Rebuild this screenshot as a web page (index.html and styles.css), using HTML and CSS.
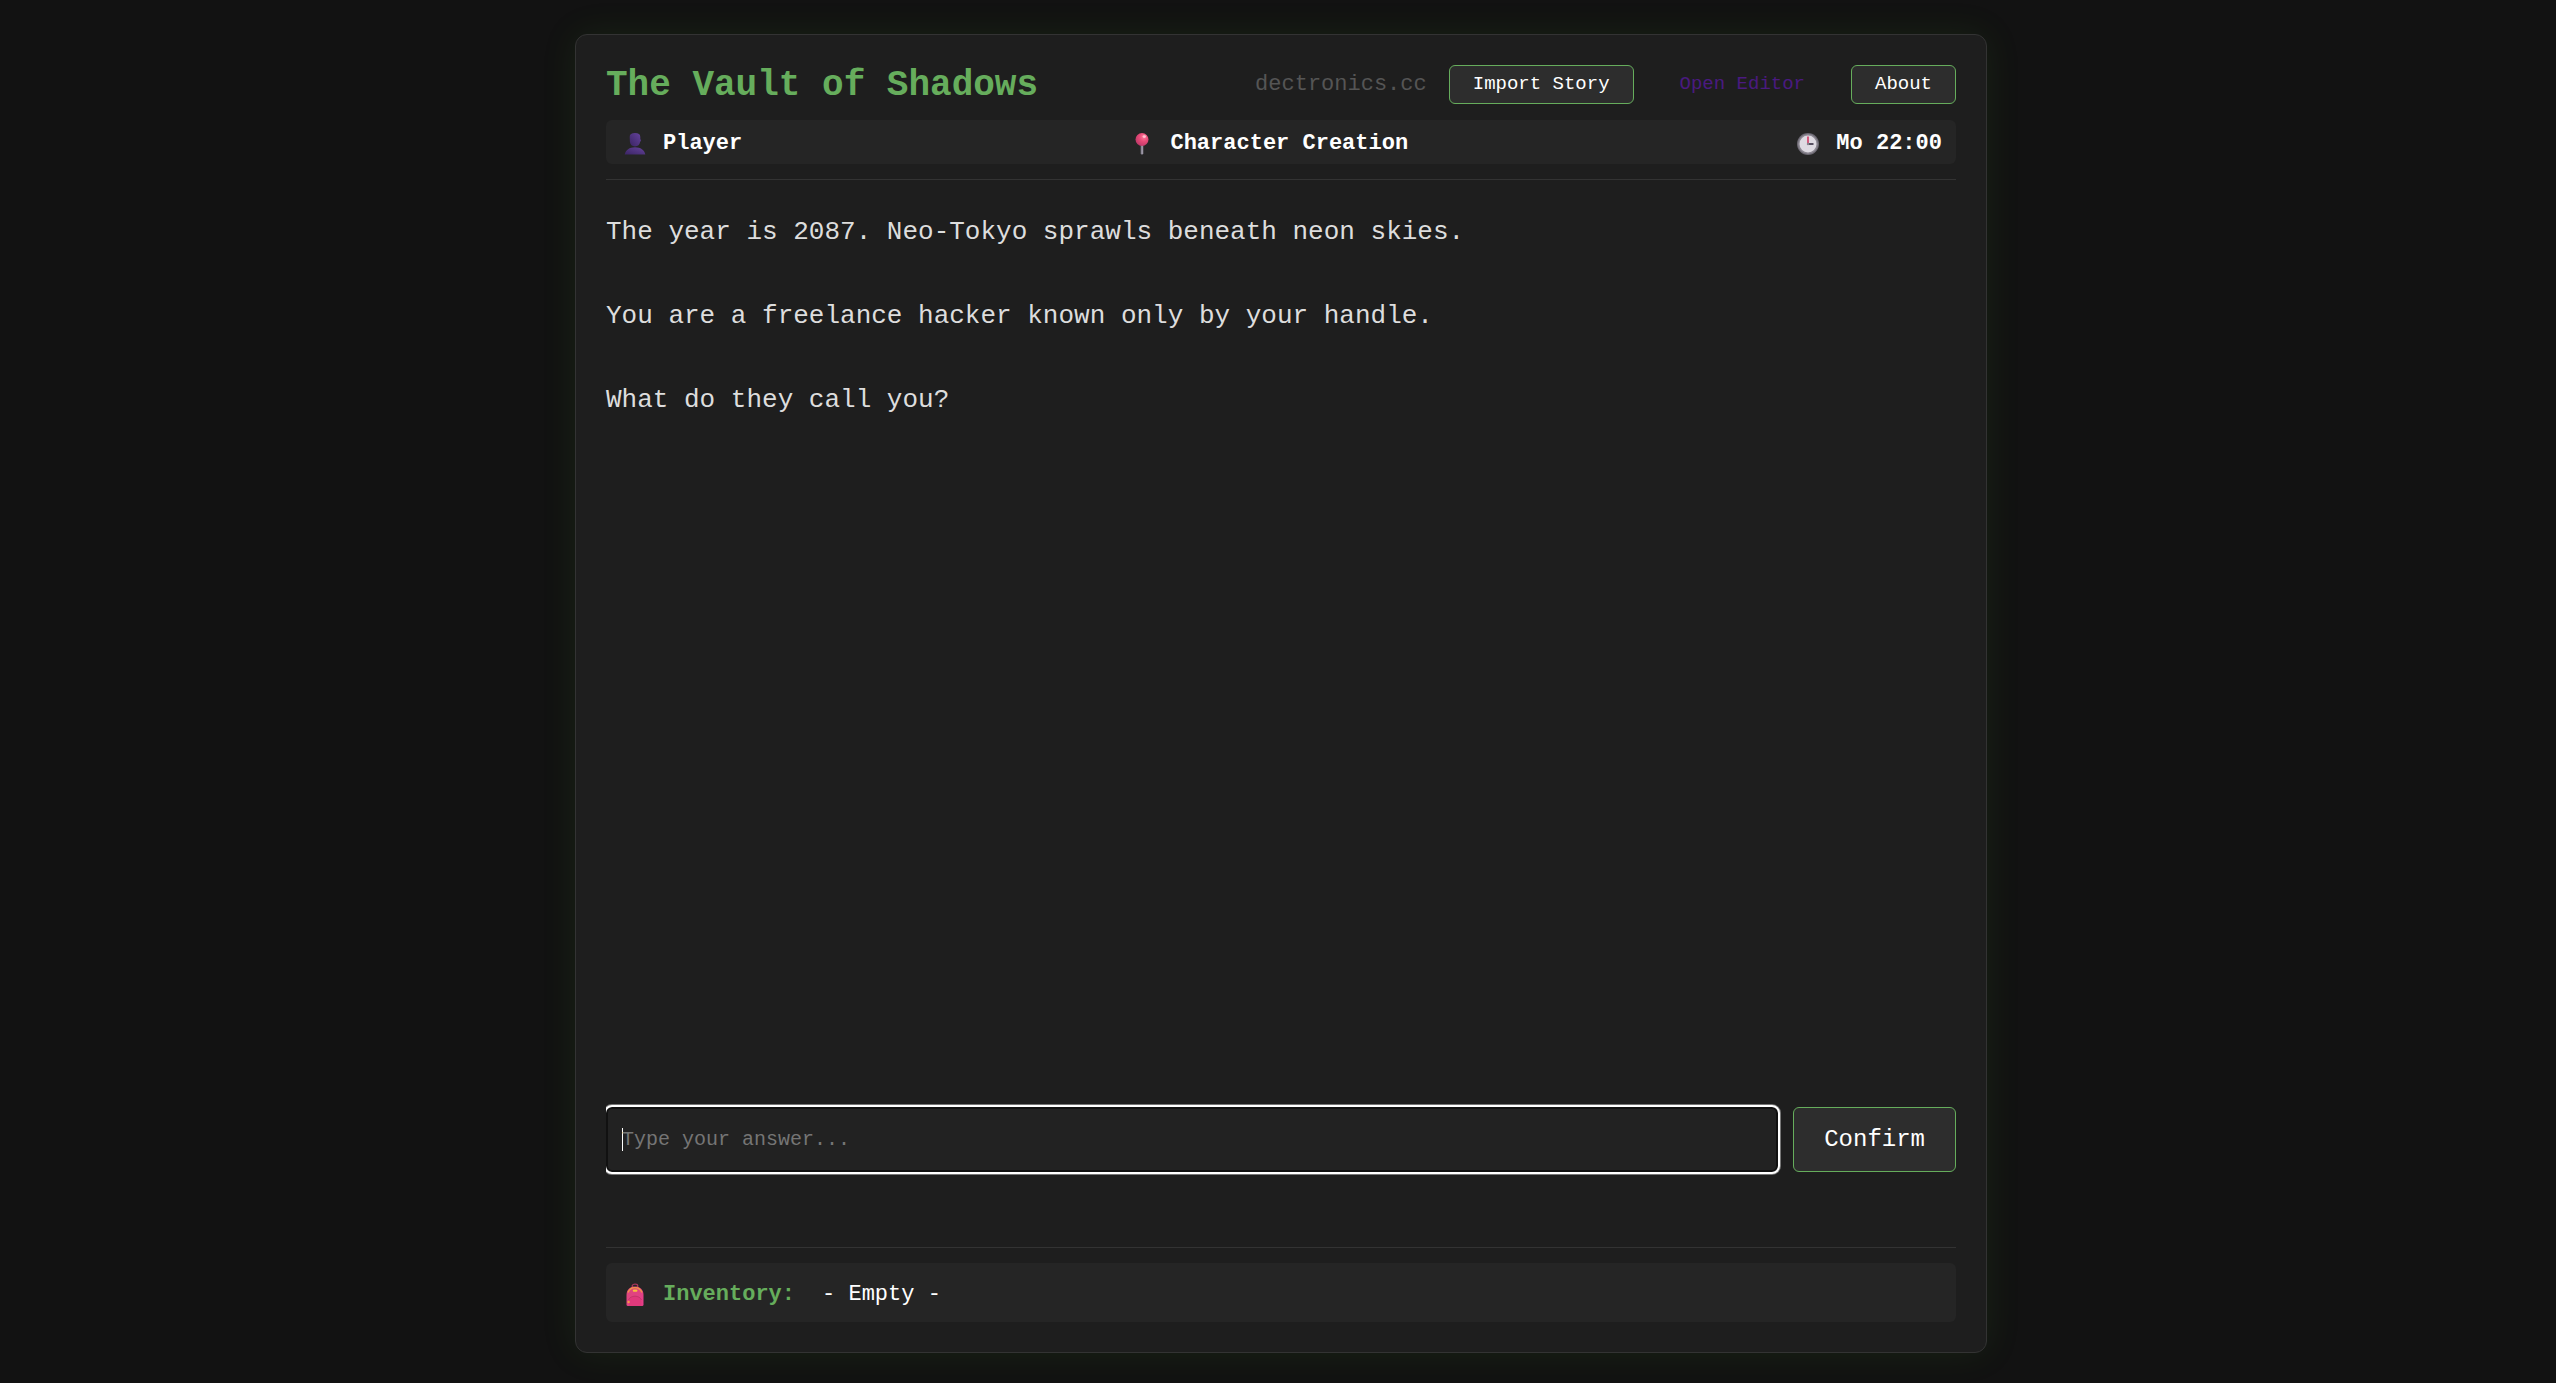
FILE: index.html
```html
<!DOCTYPE html>
<html lang="en">
<head>
    <meta charset="UTF-8">
    <meta name="viewport" content="width=device-width, initial-scale=1.0">
    <title>The Vault of Shadows</title>
    <link rel="stylesheet" href="styles.css">
</head>
<body>
    <main class="game">
        <header class="game-header">
            <div class="title-row">
                <h1>The Vault of Shadows</h1>
                <nav class="menu">
                    <span class="brand">dectronics.cc</span>
                    <button type="button" class="btn">Import Story</button>
                    <a href="#editor" class="editor-link">Open Editor</a>
                    <button type="button" class="btn">About</button>
                </nav>
            </div>
            <div class="status-bar">
                <div class="status-item">
                    <svg class="icon" viewBox="0 0 30 24" aria-hidden="true">
                        <defs>
                            <linearGradient id="bust" x1="0" y1="1" x2="1" y2="0">
                                <stop offset="0" stop-color="#3a2463"/>
                                <stop offset="1" stop-color="#65439c"/>
                            </linearGradient>
                        </defs>
                        <path d="M9.700 5C9.700 2 11.500 1 15 1s5.300 1 5.300 4v2.200c.9.100.9 2.200-.2 2.600-.4 2.800-2.100 4.700-5.100 4.700s-4.700-1.900-5.100-4.700z" fill="url(#bust)"/>
                        <path d="M4.700 22.500C5.500 18 9.500 15.200 15 15.200S24.500 18 25.300 22.500z" fill="url(#bust)"/>
                    </svg>
                    <span>Player</span>
                </div>
                <div class="status-item">
                    <svg class="icon" viewBox="0 0 30 24" aria-hidden="true">
                        <defs>
                            <radialGradient id="pin" cx=".65" cy=".3" r=".7">
                                <stop offset="0" stop-color="#ff7c9c"/>
                                <stop offset=".5" stop-color="#e84a77"/>
                                <stop offset="1" stop-color="#c23a6a"/>
                            </radialGradient>
                        </defs>
                        <path d="M13.700 12h2.600v9.500l-1.300 1.500-1.300-1.500z" fill="#85808f"/>
                        <path d="M14.800 13h.8v9h-.8z" fill="#aaa5b3"/>
                        <circle cx="15" cy="7.500" r="6.500" fill="url(#pin)"/>
                        <ellipse cx="17.300" cy="4.600" rx="1.700" ry="1.300" fill="#ffc3cf"/>
                    </svg>
                    <span>Character Creation</span>
                </div>
                <div class="status-item">
                    <svg class="icon" viewBox="0 0 30 24" aria-hidden="true">
                        <circle cx="15" cy="12" r="11" fill="#6c6872"/>
                        <circle cx="15" cy="12" r="10" fill="#8b8791"/>
                        <circle cx="15" cy="12" r="8.500" fill="#dedae2"/>
                        <path d="M15 4.500V12" stroke="#d34b72" stroke-width="1.800"/>
                        <path d="M14 12h6.500" stroke="#474052" stroke-width="1.800"/>
                        <circle cx="15" cy="12" r="1.200" fill="#8b8791"/>
                    </svg>
                    <span>Mo 22:00</span>
                </div>
            </div>
        </header>

        <section class="story">
            <p>The year is 2087. Neo-Tokyo sprawls beneath neon skies.</p>
            <p>You are a freelance hacker known only by your handle.</p>
            <p>What do they call you?</p>
        </section>

        <form class="answer-form">
            <input type="text" id="answer" placeholder="Type your answer..." aria-label="Your answer" autocomplete="off" autofocus>
            <button type="button" class="btn btn-confirm">Confirm</button>
        </form>

        <footer class="game-footer">
            <div class="inventory">
                <svg class="icon" viewBox="0 0 30 24" aria-hidden="true">
                    <defs>
                        <linearGradient id="bag" x1="0" y1="0" x2="1" y2="1">
                            <stop offset="0" stop-color="#dc4779"/>
                            <stop offset="1" stop-color="#e63d8c"/>
                        </linearGradient>
                    </defs>
                    <ellipse cx="15" cy="3" rx="2.800" ry="1.800" fill="none" stroke="#a7375b" stroke-width="1.300"/>
                    <path d="M6.500 12C6.500 6.500 10 3.500 15 3.500S23.500 6.500 23.500 12v9.500q0 1.500-1.500 1.500H8q-1.500 0-1.500-1.500z" fill="url(#bag)"/>
                    <path d="M8 9.500C9.500 5.800 12 4.600 15 4.600s5.500 1.200 7 4.900" fill="none" stroke="#ef9b42" stroke-width="1.200"/>
                    <rect x="12.800" y="6.600" width="4.600" height="2.200" rx="1" fill="#f8bd3c"/>
                    <path d="M9 23v-3.500c0-4 2.300-6 6-6s6.500 2 6.500 6V23z" fill="#e0397c"/>
                    <path d="M8.500 17c1-2.500 3.500-3.800 6.500-3.800s5.500 1.300 6.500 3.800" fill="none" stroke="#bd3263" stroke-width=".8"/>
                    <circle cx="8.600" cy="19" r="1.200" fill="#f59a48"/>
                </svg>
                <span class="inventory-label">Inventory:</span>
                <span>- Empty -</span>
            </div>
        </footer>
    </main>
</body>
</html>
```
FILE: styles.css
```css
* {
    box-sizing: border-box;
}

body {
    display: flex;
    justify-content: center;
    min-height: 100vh;
    margin: 0;
    padding: 34px 0 30px 6px;
    background-color: #121212;
    color: #fff;
    font-family: "Courier New", "Liberation Mono", monospace;
    font-size: 22px;
}

.game {
    display: flex;
    flex-direction: column;
    width: 100%;
    max-width: 1412px;
    padding: 30px;
    background-color: #1e1e1e;
    border: 1px solid #333;
    border-radius: 12px;
    box-shadow: 0 0 36px rgba(76, 175, 40, 0.1);
}

.game-header {
    padding-bottom: 15px;
    border-bottom: 1px solid #333;
}

.title-row {
    display: flex;
    justify-content: space-between;
    align-items: center;
    margin-bottom: 16px;
}

h1 {
    margin: 0;
    padding-top: 3px;
    color: #66ad5c;
    font-size: 36px;
    line-height: 36px;
}

.menu {
    display: flex;
    align-items: center;
    gap: 22px;
}

.brand {
    color: #555;
}

.btn, .editor-link {
    padding: 6px 23px;
    border: 1px solid #66ad5c;
    border-radius: 6px;
    font-family: inherit;
    font-size: 19px;
    line-height: 25px;
}

.btn {
    background-color: #2d2d2d;
    color: #fff;
    cursor: pointer;
}

.btn:hover {
    background-color: #3a3a3a;
}

.editor-link {
    border-color: transparent;
    color: #4a1a80;
    text-decoration: none;
}

.status-bar {
    display: flex;
    justify-content: space-between;
    padding: 9px 14px 5px;
    background-color: #252525;
    border-radius: 6px;
    font-weight: bold;
    line-height: 30px;
}

.status-item {
    display: flex;
    align-items: center;
    gap: 13px;
}

.icon {
    width: 30px;
    height: 24px;
}

.story {
    flex: 1;
    padding-top: 31px;
    color: #ddd;
    font-size: 26px;
    line-height: 42px;
}

.story p {
    margin: 0 0 42px;
}

/* clips the focus ring on the left edge */
.answer-form {
    display: flex;
    gap: 15px;
    padding: 4px 0;
    margin-bottom: 71px;
    overflow: hidden;
}

.answer-form input {
    flex: 1;
    padding: 0 14px;
    background-color: #222;
    border: 2px solid #111;
    border-radius: 6px;
    color: #fff;
    font-family: inherit;
    font-size: 20px;
    outline: 2px solid #fff;
    box-shadow: 0 0 0 3px #777;
}

.answer-form input::placeholder {
    color: #757575;
}

/* steady cursor while the field is empty */
.answer-form input:placeholder-shown {
    background-image: linear-gradient(#fff, #fff);
    background-position: 14px center;
    background-size: 1px 23px;
    background-repeat: no-repeat;
    caret-color: transparent;
}

.btn-confirm {
    padding: 19px 30px;
    font-size: 24px;
}

.game-footer {
    padding-top: 15px;
    border-top: 1px solid #333;
}

.inventory {
    display: flex;
    align-items: center;
    gap: 13px;
    padding: 16px 14px 12px;
    background-color: #252525;
    border-radius: 6px;
    line-height: 31px;
}

.inventory-label {
    margin-right: 14px;
    color: #66ad5c;
    font-weight: bold;
}
```
